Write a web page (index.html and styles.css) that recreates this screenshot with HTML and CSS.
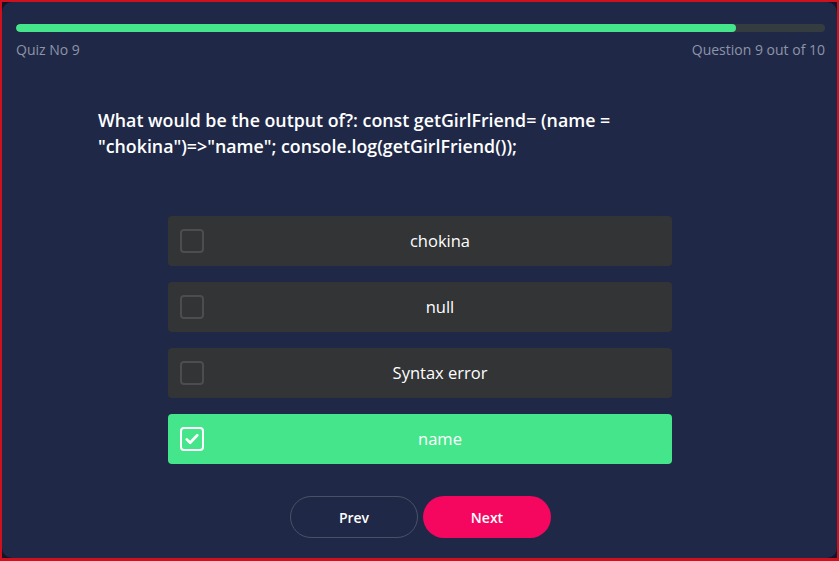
FILE: index.html
```html
<!DOCTYPE html>
<html>
<head>
<meta charset="utf-8">
<link rel="stylesheet" href="styles.css">
</head>
<body>
<div class="frame">
  <div class="card">
    <div class="progress"><div class="progress-fill" style="width: 89%"></div></div>
    <div class="meta">
      <span>Quiz No 9</span>
      <span>Question 9 out of 10</span>
    </div>
    <p class="question">What would be the output of?: const getGirlFriend= (name = "chokina")=&gt;"name"; console.log(getGirlFriend());</p>
    <div class="options">
      <div class="option"><span class="box"></span><span class="label">chokina</span></div>
      <div class="option"><span class="box"></span><span class="label">null</span></div>
      <div class="option"><span class="box"></span><span class="label">Syntax error</span></div>
      <div class="option selected"><span class="box"><svg viewBox="0 0 24 24" width="18" height="18"><path d="M5 12.5l4.5 4.5L19 7" fill="none" stroke="#fff" stroke-width="3.5" stroke-linecap="round" stroke-linejoin="round"/></svg></span><span class="label">name</span></div>
    </div>
    <div class="nav">
      <button class="btn prev">Prev</button>
      <button class="btn next">Next</button>
    </div>
  </div>
</div>
</body>
</html>
```
FILE: styles.css
```css
* { box-sizing: border-box; }
html, body { margin: 0; padding: 0; }
body {
  width: 839px;
  height: 561px;
  font-family: "Open Sans", "Noto Sans", sans-serif;
  background: #c8101a;
}
.frame {
  width: 839px;
  height: 561px;
  border: 2px solid #d0101c;
  border-bottom-width: 3px;
  background: #11142a;
}
.card {
  height: 100%;
  background: #1f2947;
  border-radius: 10px;
  padding: 22px 12px 0 14px;
}
.progress {
  height: 8px;
  background: #353c40;
  border-radius: 4px;
  overflow: hidden;
}
.progress-fill {
  height: 100%;
  background: #45e68b;
  border-radius: 4px;
}
.meta {
  display: flex;
  justify-content: space-between;
  margin-top: 8px;
  font-size: 14px;
  color: #8e94a8;
  line-height: 20px;
}
.question {
  margin: 47px 84px 0 82px;
  color: #ffffff;
  font-size: 17.8px;
  font-weight: 600;
  line-height: 26px;
}
.options {
  width: 504px;
  margin: 57px 0 0 152px;
  display: flex;
  flex-direction: column;
  gap: 16px;
}
.option {
  height: 50px;
  background: #323436;
  border-radius: 4px;
  display: flex;
  align-items: center;
  padding-left: 12px;
  padding-bottom: 2px;
}
.box {
  width: 24px;
  height: 24px;
  margin-top: 2px;
  border: 2px solid #4b4e51;
  border-radius: 4px;
  display: flex;
  align-items: center;
  justify-content: center;
  flex: none;
}
.label {
  flex: 1;
  text-align: center;
  padding-left: 4px;
  color: #ffffff;
  font-size: 16.5px;
  font-weight: 500;
}
.option.selected { background: #45e68b; }
.option.selected .box { border-color: #ffffff; }
.nav {
  display: flex;
  justify-content: center;
  gap: 5px;
  margin-top: 32px;
}
.btn {
  width: 128px;
  height: 42px;
  border-radius: 21px;
  font-family: inherit;
  font-size: 14px;
  font-weight: 600;
  color: #ffffff;
  cursor: pointer;
}
.prev {
  background: transparent;
  border: 1px solid #4a5166;
}
.next {
  background: #f5075f;
  border: none;
}
```
